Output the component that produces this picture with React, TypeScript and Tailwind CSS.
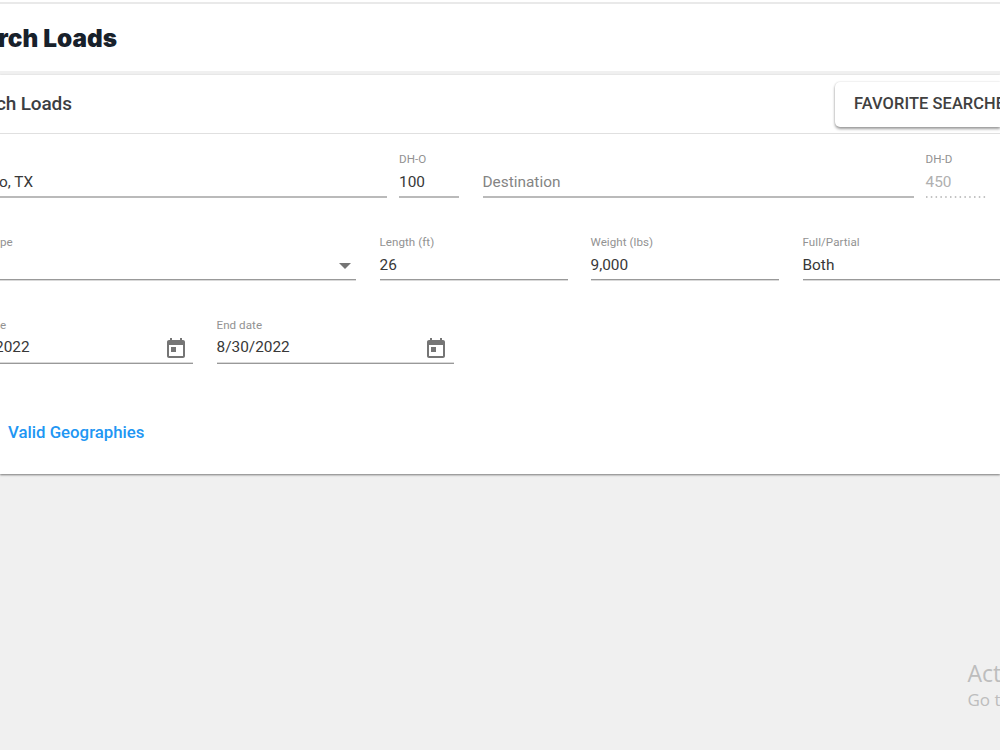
import { clsx } from "clsx";
import type { ReactNode } from "react";

interface FieldProps {
  label?: string;
  value?: string;
  className?: string;
  valueClass?: string;
  placeholder?: boolean;
  disabled?: boolean;
  lineClass?: string;
  icon?: ReactNode;
}

function Field({
  label,
  value,
  className,
  valueClass = "pt-[2px]",
  placeholder,
  disabled,
  lineClass = "h-[2px] border-t border-[#999999] bg-[#d9d9d9]",
  icon,
}: FieldProps) {
  return (
    <div className={clsx("flex h-[50px] shrink-0 flex-col", className)}>
      <span className="h-[22px] text-[11.6px] leading-[22px] tracking-[0.05px] whitespace-nowrap text-[#929292]">
        {label}
      </span>
      <div
        className={clsx(
          "flex h-[26px] items-center justify-between pb-[3px] text-[15.4px] leading-[23px] whitespace-nowrap",
          disabled ? "text-[#b0b0b0]" : placeholder ? "text-[#848484]" : "text-[#383838]",
        )}
      >
        <span className={valueClass}>{value}</span>
        {icon}
      </div>
      {disabled ? (
        <svg className="h-[2px] w-full" viewBox="0 0 60 2" preserveAspectRatio="none">
          <line x1="0" y1="1" x2="60" y2="1" stroke="#b0b0b0" strokeWidth="1.5" strokeDasharray="1.5 3.3" />
        </svg>
      ) : (
        <div className={clsx("w-full shrink-0", lineClass)} />
      )}
    </div>
  );
}

function CalendarIcon() {
  return (
    <svg className="mt-[2px] mr-[5.5px] size-6 shrink-0" viewBox="0 0 24 24" fill="#757575">
      <path d="M19 3h-1V1h-2v2H8V1H6v2H5c-1.11 0-1.99.9-1.99 2L3 19c0 1.1.89 2 2 2h14c1.1 0 2-.9 2-2V5c0-1.1-.9-2-2-2zm0 16H5V8h14v11zM7 10h5v5H7z" />
    </svg>
  );
}

function CaretIcon() {
  return (
    <svg className="mt-[2px] mr-[5px] h-[6px] w-[12px]" viewBox="0 0 12 6" fill="#757575">
      <path d="M0 0h12L6 6z" />
    </svg>
  );
}

export default function App() {
  return (
    <div className="relative flex h-[750px] w-[1000px] flex-col overflow-hidden bg-[#f0f0f0] font-[Roboto,sans-serif]">
      {/* Page title */}
      <header className="flex h-[71px] shrink-0 flex-col bg-white pt-[2px]">
        <div className="h-[2px] bg-[#e9e9e9]" />
        <h1 className="-ml-[2px] pt-[16px] font-[Inter,sans-serif] text-[24.3px] leading-[36px] font-black tracking-[0.05px] whitespace-nowrap text-[#18212b]">
          rch Loads
        </h1>
      </header>

      {/* Search card */}
      <section className="mt-1 flex h-[399px] shrink-0 flex-col bg-white shadow-[0_1px_2px_rgba(0,0,0,0.5)]">
        <div className="flex h-[59px] shrink-0 justify-between border-b border-[#e0e0e0]">
          <h2 className="-ml-[4px] pt-[16px] text-[19px] leading-[26px] font-medium tracking-[-0.15px] text-[#3c3e42]">
            ch Loads
          </h2>
          <button className="mt-[7px] h-[45px] w-[165px] overflow-hidden rounded-l-[5px] bg-white pl-[19px] text-left text-[16.4px] font-medium tracking-[0.1px] whitespace-nowrap text-[#404040] shadow-[0_2px_3px_rgba(0,0,0,0.38),0_0_2px_rgba(0,0,0,0.16)]">
            FAVORITE SEARCHE
          </button>
        </div>

        <div className="mt-[14px] flex">
          <Field value="o, TX" valueClass="-ml-px pt-[2px]" className="w-[387px]" lineClass="h-[2px] bg-[#bababa]" />
          <Field label="DH-O" value="100" className="ml-3 w-[60px]" lineClass="h-[2px] bg-[#bababa]" />
          <Field value="Destination" placeholder className="ml-[23.5px] w-[431px]" lineClass="h-[2px] bg-[#bababa]" />
          <Field label="DH-D" value="450" disabled className="ml-3 w-[60px]" />
        </div>

        <div className="mt-[33px] flex overflow-hidden">
          <Field label="pe" className="w-[356px]" icon={<CaretIcon />} />
          <Field label="Length (ft)" value="26" className="ml-[23.5px] w-[188px]" />
          <Field label="Weight (lbs)" value="9,000" className="ml-[23px] w-[188px]" />
          <Field label="Full/Partial" value="Both" className="ml-[24px] w-[198px]" />
        </div>

        <div className="mt-[33px] flex">
          <Field
            label="e"
            value="2022"
            valueClass="-ml-[5px]"
            className="w-[193px]"
            lineClass="h-[2px] border-b border-[#999999] bg-[#d9d9d9]"
            icon={<CalendarIcon />}
          />
          <Field
            label="End date"
            value="8/30/2022"
            valueClass=""
            className="ml-[23.5px] w-[237px]"
            lineClass="h-[2px] border-b border-[#999999] bg-[#d9d9d9]"
            icon={<CalendarIcon />}
          />
        </div>

        <a className="mt-[55px] ml-2 text-[16.8px] leading-[26px] font-medium text-[#2196f3]">Valid Geographies</a>
      </section>

      {/* Desktop watermark */}
      <div className="absolute top-[657px] left-[967.5px] font-['Open_Sans',sans-serif] whitespace-nowrap text-[#bdbdbd]">
        <p className="text-[23px] leading-[32px]">Act</p>
        <p className="text-[17px] leading-[22px]">Go t</p>
      </div>
    </div>
  );
}
